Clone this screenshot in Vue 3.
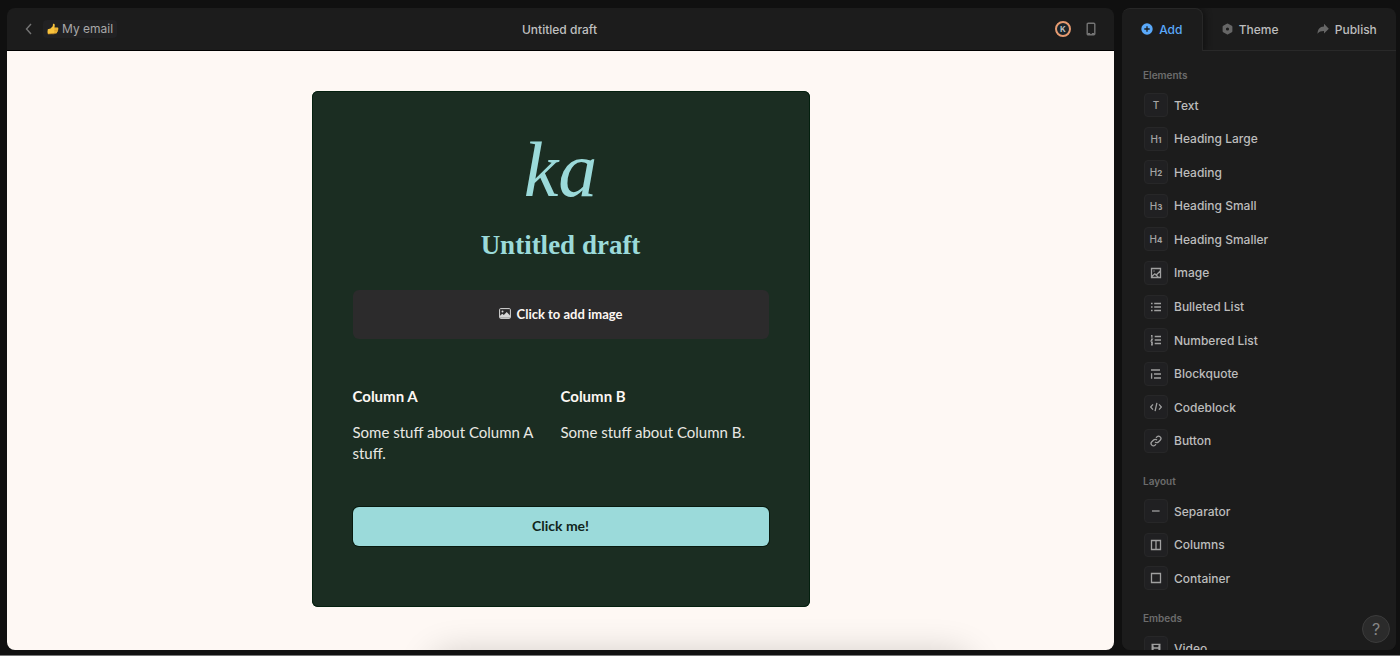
<script setup>
const groups = [
  {
    title: 'Elements',
    size: 'long',
    items: [
      { label: 'Text', glyph: 'T' },
      { label: 'Heading Large', glyph: 'H', level: 1 },
      { label: 'Heading', glyph: 'H', level: 2 },
      { label: 'Heading Small', glyph: 'H', level: 3 },
      { label: 'Heading Smaller', glyph: 'H', level: 4 },
      { label: 'Image', path: 'M1.5 1.5h9v9h-9zM1.8 9.5 4.8 6.8 6.2 8 10.3 4M6.5 8.2l2 2.2M4 3.6v.8' },
      { label: 'Bulleted List', path: 'M1 2.5h1.6M1 6h1.6M1 9.5h1.6M4.2 2.5H11M4.2 6H11M4.2 9.5H11' },
      { label: 'Numbered List', path: 'M4.7 2.5H11M4.7 6H11M4.7 9.5H11M1 1.6h.9v2.2M1 5.1h1.3L1.1 6.9h1.3M1 8.4h1.2v2.4H1M1.3 9.6h.9' },
      { label: 'Blockquote', path: 'M1 2h9M4 6h7M4 10h7M1.6 5.3v5.4' },
      { label: 'Codeblock', path: 'M3 3.4.6 6 3 8.6M9 3.4 11.4 6 9 8.6M6.9 1.8 5.1 10.2' },
      { label: 'Button', path: 'M5 6.8a2.3 2.3 0 0 0 3.4.2l1.8-1.8a2.3 2.3 0 0 0-3.3-3.3L6 2.8M7 5.2a2.3 2.3 0 0 0-3.4-.2L1.8 6.8a2.3 2.3 0 0 0 3.3 3.3L6 9.2' },
    ],
  },
  {
    title: 'Layout',
    size: 'short',
    items: [
      { label: 'Separator', path: 'M2 6h7.6' },
      { label: 'Columns', path: 'M1.5 1.5h9v9h-9zM6 1.5v9' },
      { label: 'Container', path: 'M1.5 1.5h9v9h-9z' },
    ],
  },
  {
    title: 'Embeds',
    size: 'single',
    items: [{ label: 'Video', path: 'M2.2 2v8M9.8 2v8M1.5 2.3h9M1.5 9.7h9M1.5 6h9M3 3.2v5.6M9 3.2v5.6' }],
  },
]
</script>

<template>
  <div class="app">
    <main class="editor">
      <header class="bar">
        <div class="crumbs">
          <button class="back" aria-label="Back">
            <svg width="12" height="12" viewBox="0 0 12 12"><path d="M8 1 3.5 6 8 11" /></svg>
          </button>
          <a class="crumb" href="#">
            <svg width="12" height="12" viewBox="0 0 12 12" aria-hidden="true">
              <path fill="#f9c33c" d="M.8 6.3 3.5 5.4 5.7 3.2 6 1.1C6.2.3 7.7.6 7.8 2L7.5 4.4h3c1.1 0 1.2 1.3.4 1.6.7.4.5 1.4-.2 1.6.4.6 0 1.4-.6 1.5.2.8-.3 1.4-1.1 1.5L4.3 10.8.9 11Q.2 8.6.8 6.3Z" />
              <path fill="none" stroke="#c98822" stroke-width=".6" d="M7.4 6h3.4M7.3 7.6h3.3M7.2 9.1H10M.9 11l3.4-.2 3 .1" />
            </svg>
            <span>My email</span>
          </a>
        </div>
        <h1 class="doc-title">Untitled draft</h1>
        <div class="tools">
          <button class="avatar" aria-label="Account">K</button>
          <button class="device" aria-label="Mobile preview">
            <svg width="10" height="14" viewBox="0 0 10 14"><rect x="1.2" y="1.2" width="7.6" height="11.6" rx="1" /><path d="M1.5 11.6h2.7M5.8 11.6h2.7" /></svg>
          </button>
        </div>
      </header>

      <div class="canvas">
        <article class="card">
          <div class="logo">ka</div>
          <h2 class="title">Untitled draft</h2>
          <button class="add-image">
            <svg width="12" height="11" viewBox="0 0 12 11">
              <rect x=".6" y=".6" width="10.8" height="9.8" rx="1" fill="none" stroke="#d8d8d8" />
              <circle cx="3.5" cy="3.6" r="1" fill="#d8d8d8" />
              <path fill="#d8d8d8" d="m1 9.8 0-2 2.3-2 1.5 1.2L7.7 4 11 7.4v2.4Z" />
            </svg>
            <span>Click to add image</span>
          </button>
          <div class="columns">
            <section>
              <h3>Column A</h3>
              <p>Some stuff about Column A stuff.</p>
            </section>
            <section>
              <h3>Column B</h3>
              <p>Some stuff about Column B.</p>
            </section>
          </div>
          <button class="cta">Click me!</button>
        </article>
        <div class="dock-shadow"></div>
      </div>
    </main>

    <aside class="panel">
      <nav class="tabs">
        <button class="tab active">
          <svg width="12" height="12" viewBox="0 0 12 12"><circle cx="6" cy="6" r="5.7" fill="#5aa9fa" /><path d="M6 3.3v5.4M3.3 6h5.4" stroke="#1c1c1c" stroke-width="1.3" /></svg>
          <span>Add</span>
        </button>
        <button class="tab">
          <svg width="11" height="12" viewBox="0 0 11 12"><path fill="#666" fill-rule="evenodd" d="M4.8.7q.7-.4 1.4 0l3.6 2q.6.4.6 1.1v4.4q0 .7-.6 1.1l-3.6 2q-.7.4-1.4 0l-3.6-2Q.6 8.9.6 8.2V3.8q0-.7.6-1.1ZM5.5 4.4a1.6 1.6 0 1 0 0 3.2 1.6 1.6 0 0 0 0-3.2Z" /></svg>
          <span>Theme</span>
        </button>
        <button class="tab">
          <svg width="12" height="12" viewBox="0 0 12 12"><path fill="#666" d="M7 .8v2.7C2.7 3.6.8 6.3.5 10.8 2 8.6 3.8 7.9 7 7.9v2.7l4.8-4.9Z" /></svg>
          <span>Publish</span>
        </button>
      </nav>
      <div class="groups">
        <section v-for="group in groups" :key="group.title" class="group">
          <h2>{{ group.title }}</h2>
          <ul :class="group.size">
            <li v-for="item in group.items" :key="item.label">
              <button class="item">
                <span class="tile" aria-hidden="true">
                  <svg v-if="item.path" width="12" height="12" viewBox="0 0 12 12"><path :d="item.path" /></svg>
                  <template v-else>{{ item.glyph }}<small v-if="item.level">{{ item.level }}</small></template>
                </span>
                <span>{{ item.label }}</span>
              </button>
            </li>
          </ul>
        </section>
      </div>
    </aside>
    <button class="help" aria-label="Help">?</button>
  </div>
</template>

<style>
body {
  margin: 0;
  background: #101010;
}
</style>

<style scoped>
.app {
  position: relative;
  box-sizing: border-box;
  height: 100vh;
  display: grid;
  grid-template-columns: minmax(0, 1fr) 274px;
  grid-template-rows: minmax(0, 1fr);
  gap: 8px;
  padding: 8px 4px 5px 7px;
  background: #101010;
  border-bottom: 1px solid #777;
  font-family: Inter, "Liberation Sans", sans-serif;
  font-size: 12px;
  color: #bdbdbd;
}
button {
  font: inherit;
  color: inherit;
  background: none;
  border: 0;
  padding: 0;
  cursor: pointer;
}
h1, h2, h3, p, ul {
  margin: 0;
  padding: 0;
}
svg {
  flex: none;
  display: block;
}
.editor {
  display: flex;
  flex-direction: column;
  border-radius: 8px;
  overflow: hidden;
  background: #1c1c1c;
}
.bar {
  flex: none;
  box-sizing: border-box;
  height: 43px;
  display: grid;
  grid-template-columns: 1fr auto 1fr;
  align-items: center;
  padding: 0 18px 0 16px;
  border-bottom: 1px solid #000;
}
.crumbs, .tools {
  display: flex;
  align-items: center;
}
.crumbs {
  gap: 8px;
}
.tools {
  justify-content: flex-end;
  gap: 15px;
}
.back svg, .device svg {
  fill: none;
  stroke: #747474;
  stroke-width: 1.4;
}
.crumb {
  display: flex;
  align-items: center;
  gap: 3px;
  padding: 0 4px;
  border-radius: 4px;
  line-height: 18px;
  background: #212123;
  color: #a8a8a8;
  text-decoration: none;
}
.doc-title {
  font-size: 12px;
  font-weight: 500;
  color: #c0c0c0;
}
.avatar {
  box-sizing: border-box;
  width: 16px;
  height: 16px;
  border: 2px solid #e59a70;
  border-radius: 50%;
  background: #19242a;
  font-size: 8px;
  font-weight: 700;
  line-height: 12px;
}
.canvas {
  position: relative;
  flex: 1;
  min-height: 0;
  overflow: hidden;
  background: #fef8f4;
}
.card {
  box-sizing: border-box;
  max-width: 498px;
  margin: 40px auto;
  padding: 40px 41px 61px;
  border-radius: 6px;
  background: #1b2d22;
  box-shadow: inset 0 0 0 1px #04200f;
  font-family: Lato, "Open Sans", sans-serif;
  color: #fdf7f3;
}
.logo, .title {
  font-family: "Liberation Serif", serif;
  text-align: center;
  color: #9bdada;
}
.logo {
  font-size: 78px;
  font-style: italic;
  line-height: 78px;
}
.title {
  margin-top: 19px;
  font-size: 27px;
  font-weight: 700;
  line-height: 34px;
}
.add-image {
  display: flex;
  align-items: center;
  justify-content: center;
  gap: 6px;
  width: 100%;
  height: 49px;
  margin-top: 28px;
  padding-bottom: 2px;
  border-radius: 6px;
  background: #2c2b2c;
  font-size: 13px;
  font-weight: 700;
}
.columns {
  display: grid;
  grid-template-columns: 1fr 1fr;
  margin-top: 47px;
}
.columns section {
  padding-right: 20px;
}
.columns h3 {
  font-size: 15px;
  font-weight: 700;
  line-height: 20px;
}
.columns p {
  margin-top: 16px;
  font-size: 15px;
  line-height: 21px;
  color: #e9e8e3;
}
.cta {
  display: block;
  width: 100%;
  height: 39px;
  margin-top: 43px;
  padding-bottom: 2px;
  border-radius: 6px;
  background: #9bdada;
  box-shadow: 0 0 0 1px #081a0f;
  color: #10251c;
  font-size: 14px;
  font-weight: 700;
}
.dock-shadow {
  position: absolute;
  top: 100%;
  left: 50%;
  width: 540px;
  height: 40px;
  margin-left: -130px;
  border-radius: 20px;
  box-shadow: 0 4px 36px rgba(0, 0, 0, 0.2);
}
.panel {
  display: flex;
  flex-direction: column;
  border-radius: 8px;
  overflow: hidden;
  background: #1c1c1c;
}
.tabs {
  flex: none;
  display: flex;
  height: 43px;
}
.tab {
  display: flex;
  flex: auto;
  align-items: center;
  justify-content: center;
  gap: 6px;
  border-bottom: 1px solid #292929;
  font-weight: 500;
}
.tab.active {
  padding-bottom: 2px;
  border: solid #272727;
  border-width: 1px 1px 0 0;
  border-radius: 8px 8px 0 0;
  box-shadow: 2px 0 6px #111;
  color: #5aa9fa;
}
.groups {
  position: relative;
  flex: 1;
  min-height: 0;
  overflow: hidden;
  padding: 16px 21px 0;
  background: #1c1c1c;
}
.group h2 {
  margin-bottom: 10px;
  font-size: 10px;
  font-weight: 600;
  line-height: 16px;
  color: #6c6c6c;
}
.group + .group {
  margin-top: 20px;
}
.group ul {
  display: grid;
  align-content: space-between;
  list-style: none;
}
.long {
  min-height: 360px;
}
.short {
  min-height: 91px;
}
.item {
  display: flex;
  align-items: center;
  gap: 6px;
  width: 100%;
  height: 24px;
  padding-left: 1px;
  font-weight: 500;
}
.tile {
  box-sizing: border-box;
  display: flex;
  align-items: center;
  justify-content: center;
  width: 24px;
  height: 24px;
  border: 1px solid #272728;
  border-radius: 4px;
  background: #202022;
  color: #a4a4a4;
  font-size: 10px;
}
.tile small {
  padding-top: 2px;
  font-size: 8px;
  font-weight: 700;
}
.tile svg {
  fill: none;
  stroke: #a0a0a0;
  stroke-width: 1.3;
}
.help {
  position: absolute;
  right: 10px;
  bottom: 12px;
  box-sizing: border-box;
  width: 28px;
  height: 28px;
  border: 1px solid #3c3c3c;
  border-radius: 50%;
  background: #2b2b2b;
  color: #858585;
  font-size: 16px;
}
</style>
